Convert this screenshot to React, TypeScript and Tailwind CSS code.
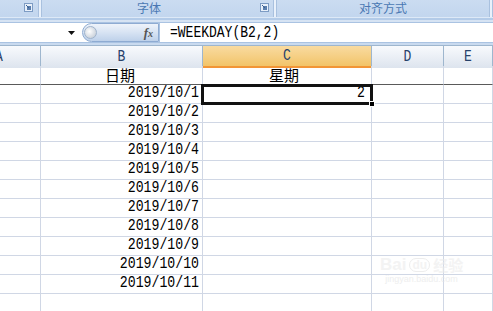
import React from 'react';

const dates = [
  '2019/10/1',
  '2019/10/2',
  '2019/10/3',
  '2019/10/4',
  '2019/10/5',
  '2019/10/6',
  '2019/10/7',
  '2019/10/8',
  '2019/10/9',
  '2019/10/10',
  '2019/10/11',
];

const mono = "font-['Liberation_Mono',monospace]";
const cjk = "font-['Noto_Sans_CJK_SC',sans-serif]";

// small dialog launcher square in the ribbon group corner
const Launcher = () => (
  <svg width="9" height="9" viewBox="0 0 9 9" className="shrink-0">
    <rect x="0.5" y="0.5" width="8" height="8" fill="#e8f0fa" stroke="#7d9cc4" />
    <rect x="3" y="3" width="4" height="4" fill="#5b7fae" />
    <path d="M2 2 L5 5" stroke="#3a5f90" strokeWidth="1" />
  </svg>
);

const Divider = () => (
  <div className="flex w-[4px] shrink-0">
    <div className="w-px bg-[#a9c1df]" />
    <div className="w-[2px] bg-[#e9f1fb]" />
    <div className="w-px bg-[#a9c1df]" />
  </div>
);

const Ribbon = () => (
  <div className="flex h-[17px] bg-gradient-to-b from-[#cbdcf1] to-[#c2d6ee]">
    <div className="flex w-[38px] shrink-0 items-start justify-end pr-[5px] pt-[3px]">
      <Launcher />
    </div>
    <Divider />
    <div className="relative flex w-[231px] shrink-0 items-start">
      <span className={`${cjk} ml-[95px] mt-[1px] text-[12px] leading-[14px] text-[#4a78b3]`}>字体</span>
      <div className="absolute right-[4px] top-[3px]">
        <Launcher />
      </div>
    </div>
    <Divider />
    <div className="flex w-[212px] shrink-0 items-start justify-center">
      <span className={`${cjk} mt-[1px] text-[12px] leading-[14px] text-[#4a78b3]`}>对齐方式</span>
    </div>
    <Divider />
    <div className="flex-1" />
  </div>
);

const FormulaBar = () => (
  <div className="flex h-[21px] border-y border-[#aac3e2] bg-white">
    <div className="flex w-[82px] shrink-0 items-center justify-end pr-[7px]">
      <svg width="7" height="4" viewBox="0 0 7 4">
        <path d="M0 0 H7 L3.5 4 Z" fill="#111" />
      </svg>
    </div>
    <div className="relative flex w-[77px] shrink-0 items-center rounded-l-full border border-[#8eabd2] bg-gradient-to-b from-[#eef3fa] via-[#d7e3f3] to-[#bed1ea]">
      <div className="ml-px h-[13px] w-[13px] rounded-full border border-[#9fb3cc] bg-[radial-gradient(circle_at_40%_40%,#ffffff,#b9c3cf)]" />
      <span className="ml-auto mr-[5px] font-['Liberation_Serif',serif] text-[13px] font-bold italic leading-none text-[#555]">
        f<span className="text-[10px]">x</span>
      </span>
    </div>
    <div className={`${mono} flex flex-1 items-center border-l border-[#aac3e2] pl-[10px] text-[13px] text-black`}>
      <span className="inline-block scale-y-125">=WEEKDAY(B2,2)</span>
    </div>
  </div>
);

const headerBase =
  'flex items-center justify-center border-r border-[#9eb6ce] text-[13px] text-[#27416a]';

const HeaderRow = () => (
  <div className={`${mono} -ml-[42px] grid h-[21px] grid-cols-[83px_162px_169px_72px_1fr] border-y border-[#9eb6ce]`}>
    <div className={`${headerBase} bg-gradient-to-b from-[#f8fafd] to-[#dde4ee]`}>
      <span className="inline-block scale-y-125">A</span>
    </div>
    <div className={`${headerBase} bg-gradient-to-b from-[#f8fafd] to-[#dde4ee]`}>
      <span className="inline-block scale-y-125">B</span>
    </div>
    <div className={`${headerBase} border-b-2 border-b-[#f29536] bg-gradient-to-b from-[#f9dba0] to-[#f2c468]`}>
      <span className="inline-block scale-y-125">C</span>
    </div>
    <div className={`${headerBase} bg-gradient-to-b from-[#f8fafd] to-[#dde4ee]`}>
      <span className="inline-block scale-y-125">D</span>
    </div>
    <div className={`${headerBase} bg-gradient-to-b from-[#f8fafd] to-[#dde4ee]`}>
      <span className="inline-block scale-y-125">E</span>
    </div>
  </div>
);

const Row = ({
  b,
  c,
  dark,
  center,
}: {
  b: React.ReactNode;
  c?: React.ReactNode;
  dark?: boolean;
  center?: boolean;
}) => {
  const line = dark ? 'border-b-[#5a5a5a]' : 'border-b-[#d0d7e5]';
  const cell = `h-[19px] border-b border-r border-r-[#d0d7e5] ${line}`;
  const align = center ? 'justify-center' : 'justify-end';
  return (
    <div className="-ml-[42px] grid grid-cols-[83px_162px_169px_72px_1fr]">
      <div className={cell} />
      <div className={`${cell} flex items-end ${align} pr-[3px]`}>{b}</div>
      <div className={`${cell} flex items-end ${align} pr-[6px]`}>{c}</div>
      <div className={cell} />
      <div className={cell} />
    </div>
  );
};

const Num = ({ v }: { v: string }) => (
  <span className={`${mono} inline-block origin-bottom scale-y-125 pb-px text-[13.2px] leading-[15px] text-black`}>{v}</span>
);

const Cjk = ({ v }: { v: string }) => (
  <span className={`${cjk} text-[15px] leading-[18px] text-black`}>{v}</span>
);

export default function App() {
  return (
    <div className="relative h-[311px] w-[493px] overflow-hidden bg-white">
      <Ribbon />
      <div className="h-px bg-[#dde9f7]" />
      <div className="h-[2px] bg-[#b3cbe8]" />
      <div className="h-[2px] bg-[#d6e3f3]" />
      <FormulaBar />
      <div className="h-[2px] bg-[#c9daef]" />
      <HeaderRow />
      <Row b={<Cjk v="日期" />} c={<Cjk v="星期" />} dark center />
      {dates.map((d, i) => (
        <Row key={d} b={<Num v={d} />} c={i === 0 ? <Num v="2" /> : null} />
      ))}
      <Row b={null} />

      {/* active cell C2 */}
      <div className="pointer-events-none absolute left-[201px] top-[84px] h-[21px] w-[172px] border-[3px] border-[#111]" />
      <div className="pointer-events-none absolute left-[369px] top-[101px] h-[6px] w-[6px] border border-white bg-black" />

      {/* watermark */}
      <div className="pointer-events-none absolute left-[380px] top-[256px] flex flex-col items-center opacity-60">
        <div className="flex items-center gap-[3px] font-['Liberation_Sans',sans-serif] text-[17px] font-bold leading-none text-[#ececec]">
          <span>Bai</span>
          <span className="rounded-full border border-[#e2e2e2] px-[2px] text-[12px]">du</span>
          <span className={`${cjk} text-[15px]`}>经验</span>
        </div>
        <span className="mt-[2px] font-['Liberation_Sans',sans-serif] text-[9px] leading-none text-[#e4e4e4]">jingyan.baidu.com</span>
      </div>
    </div>
  );
}
